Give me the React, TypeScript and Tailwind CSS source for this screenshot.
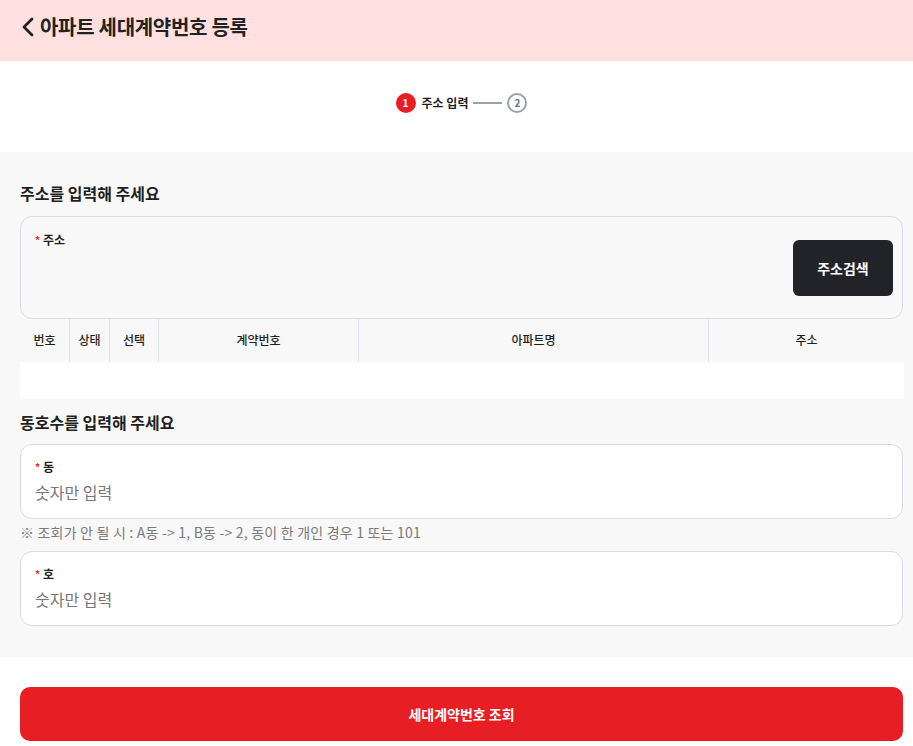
import { ChevronLeft } from 'lucide-react';

const font = { fontFamily: '"Noto Sans CJK KR", "Noto Sans", sans-serif' };

const columns = [
  { label: '번호', w: 'w-[50px]' },
  { label: '상태', w: 'w-[40px]' },
  { label: '선택', w: 'w-[49px]' },
  { label: '계약번호', w: 'w-[200px]' },
  { label: '아파트명', w: 'w-[350px]' },
  { label: '주소', w: 'flex-1' },
];

function Label({ text }: { text: string }) {
  return (
    <div className="flex h-4 items-center self-start text-[12px] font-bold leading-4 text-[#1f1f1f]">
      <span className="mr-[3px] text-[10px] text-[#e81e25]">*</span>
      {text}
    </div>
  );
}

function NumberField({ label }: { label: string }) {
  return (
    <div className="flex h-[75px] flex-col rounded-xl border border-[#d8dbe3] bg-white px-[14px] pt-[14px]">
      <Label text={label} />
      <input
        placeholder="숫자만 입력"
        className="mt-[5px] bg-transparent text-[16px] leading-6 text-[#222] outline-none placeholder:text-[#777]"
        style={font}
      />
    </div>
  );
}

export default function App() {
  return (
    <div className="h-[746px] w-full overflow-hidden bg-white" style={font}>
      {/* Header */}
      <div className="flex h-[61px] items-center bg-[#ffe0e0] pb-[7px] pl-[12px]">
        <ChevronLeft className="h-8 w-8 text-[#222]" strokeWidth={2.1} />
        <h1 className="ml-[-4px] text-[20px] font-bold tracking-[-0.3px] text-[#222]">아파트 세대계약번호 등록</h1>
      </div>

      {/* Stepper */}
      <div className="flex h-[91px] items-center justify-center pb-[8px] pl-[10px]">
        <div className="flex h-[20px] w-[20px] items-center justify-center rounded-full bg-[#e81e25] text-[10px] font-bold text-white">
          1
        </div>
        <span className="ml-[6px] text-[12px] font-bold text-[#1f1f1f]">주소 입력</span>
        <div className="mx-[5px] h-[2px] w-[29px] bg-[#9aa1ab]" />
        <div className="flex h-[20px] w-[20px] items-center justify-center rounded-full border-2 border-[#9aa1ab] text-[10px] font-bold text-[#6b7280]">
          2
        </div>
      </div>

      {/* Form */}
      <div className="bg-[#f8f8f8] pb-[31px] pl-[20px] pr-[10px] pt-[29px]">
        <h2 className="text-[16px] font-bold leading-6 text-[#1f1f1f]">주소를 입력해 주세요</h2>

        <div className="mt-[11px] flex h-[103px] justify-between rounded-xl border border-[#d8dbe3] bg-[#f8f8f9] pl-[14px] pr-[9px] pt-[15px]">
          <Label text="주소" />
          <button className="mt-[8px] h-[56px] w-[100px] rounded-md bg-[#222328] text-[14px] font-bold text-white">
            주소검색
          </button>
        </div>

        <div className="flex h-[43px] w-[884px]">
          {columns.map((c, i) => (
            <div
              key={c.label}
              className={`${c.w} flex items-center justify-center pb-[2px] text-[12px] font-medium text-[#1f1f1f] ${
                i < columns.length - 1 ? 'border-r border-[#dde2e8]' : ''
              }`}
            >
              {c.label}
            </div>
          ))}
        </div>
        <div className="h-[37px] w-[884px] bg-white" />

        <h2 className="mt-[11px] text-[16px] font-bold leading-6 text-[#1f1f1f]">동호수를 입력해 주세요</h2>
        <div className="mt-[10px]">
          <NumberField label="동" />
        </div>
        <p className="mt-[3px] text-[14px] leading-5 tracking-[0.2px] text-[#7a7a7a]">
          ※ 조회가 안 될 시 : A동 -&gt; 1, B동 -&gt; 2, 동이 한 개인 경우 1 또는 101
        </p>
        <div className="mt-[9px]">
          <NumberField label="호" />
        </div>
      </div>

      {/* Submit */}
      <div className="pl-[20px] pr-[10px] pt-[30px]">
        <button className="h-[54px] w-full rounded-[10px] bg-[#e81e25] text-[14px] font-bold text-white">
          세대계약번호 조회
        </button>
      </div>
    </div>
  );
}
